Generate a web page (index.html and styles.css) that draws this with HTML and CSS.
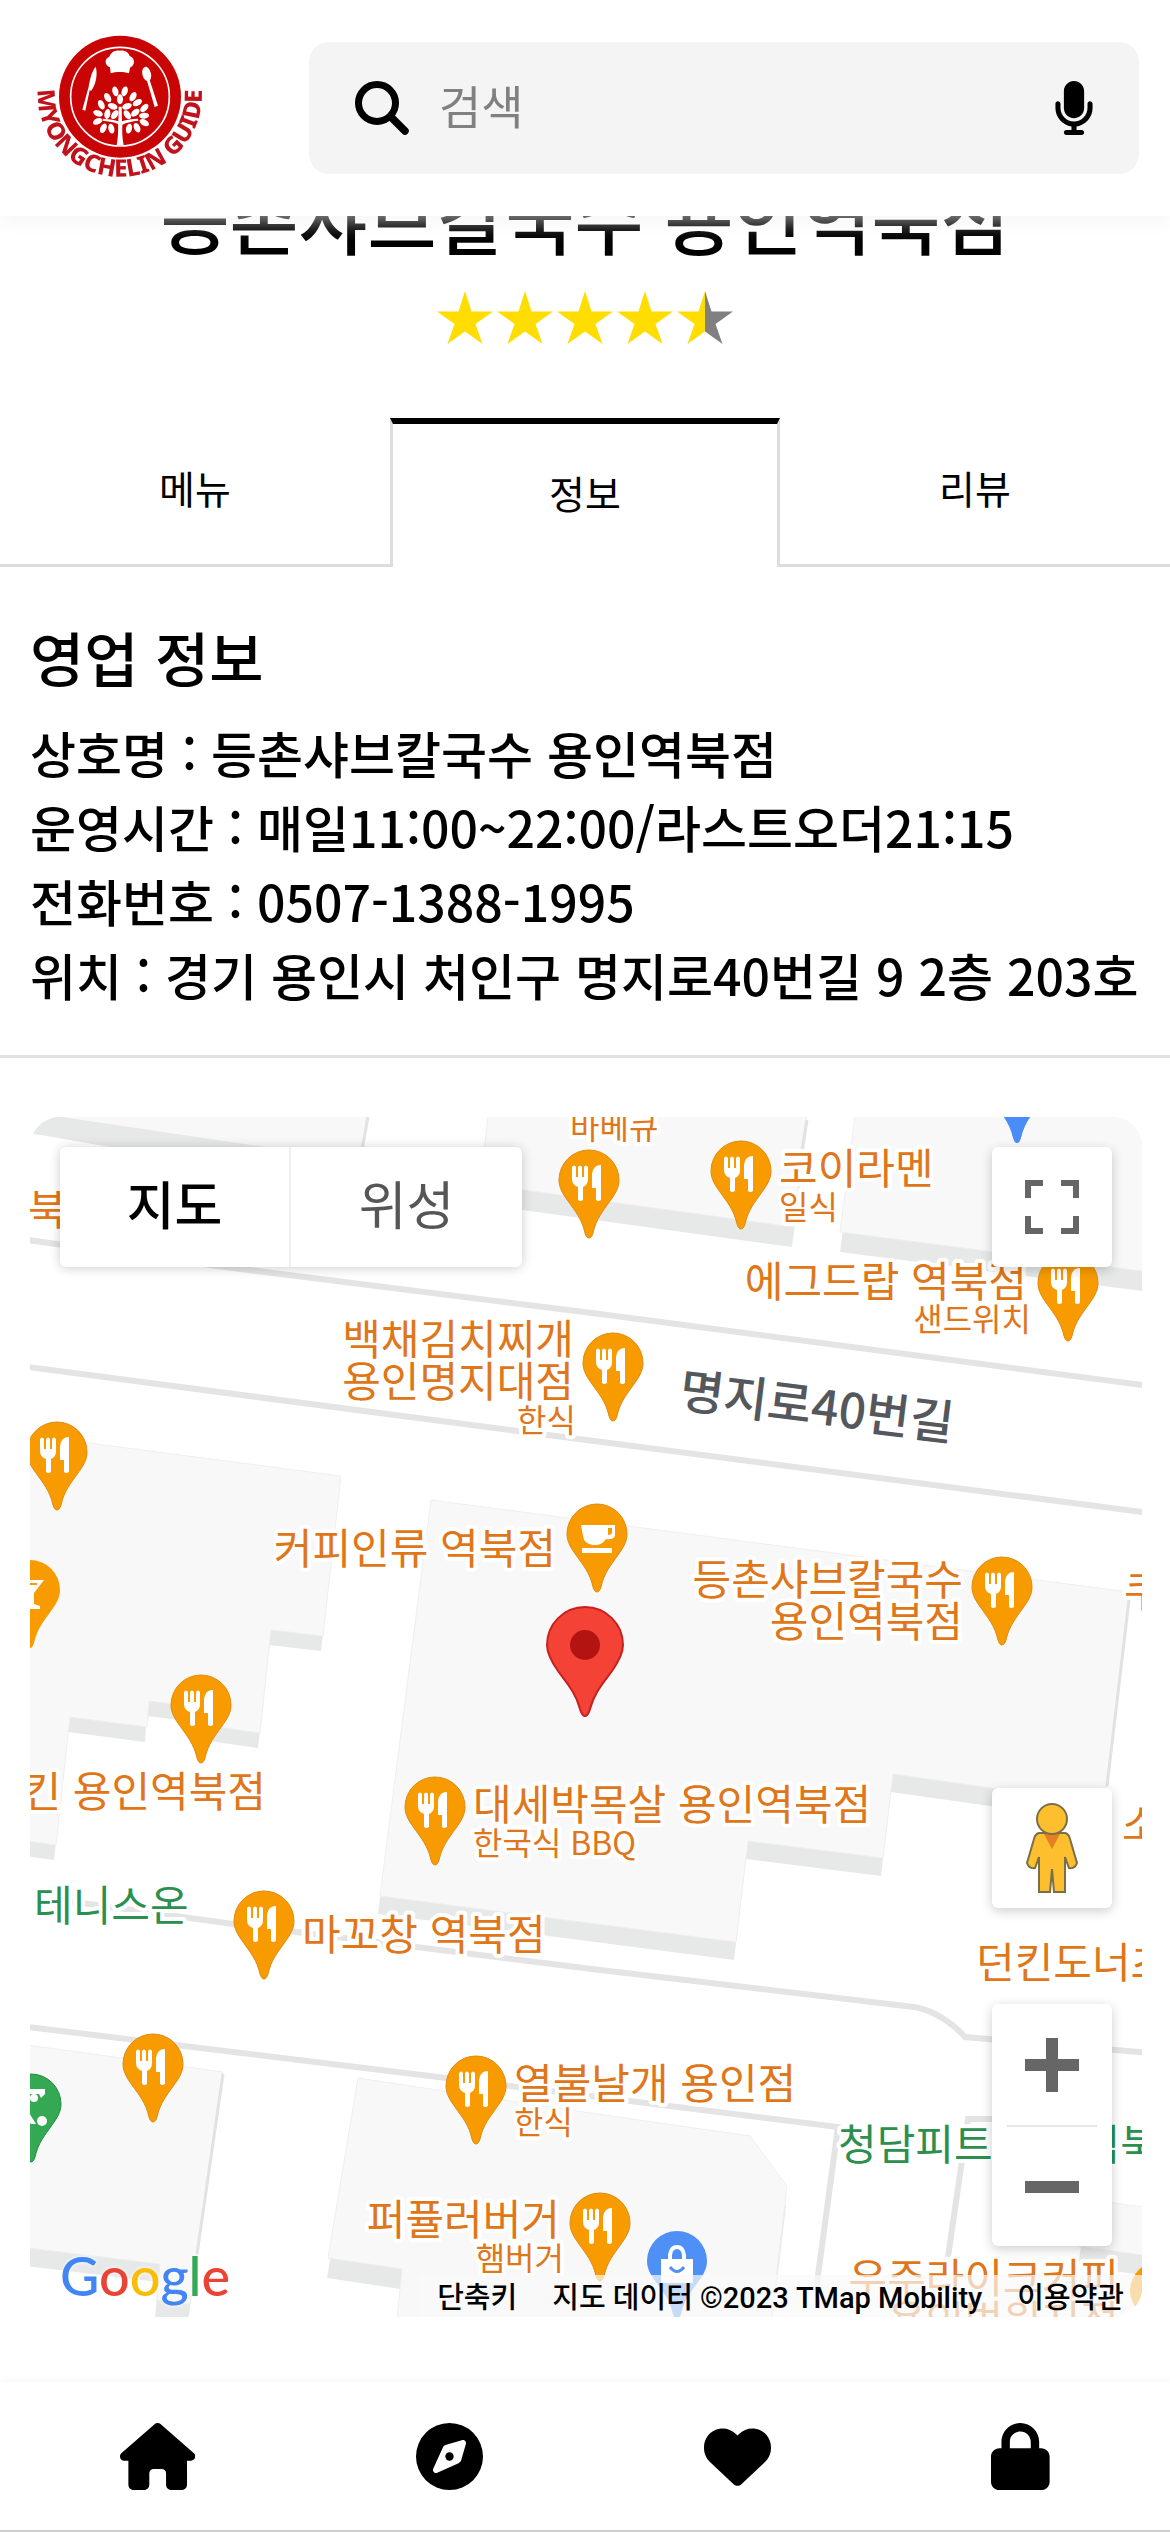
FILE: index.html
```html
<!DOCTYPE html>
<html lang="ko">
<head>
<meta charset="utf-8">
<meta name="viewport" content="width=device-width, initial-scale=1">
<title>등촌샤브칼국수 용인역북점</title>
<link rel="stylesheet" href="styles.css">
</head>
<body>
<header class="topbar">
  <a class="logo" href="#" aria-label="Myongchelin Guide">
    <svg viewBox="0 0 540 480">
      <defs>
        <path id="ring" d="M25 178 A246 246 0 1 0 515 178"/>
        <ellipse id="leaf" rx="9" ry="15"/>
      </defs>
      <circle cx="270" cy="206" r="183" fill="#c90404"/>
      <circle cx="270" cy="206" r="148" fill="none" stroke="#fff" stroke-width="5"/>
      <g fill="#fff">
        <path d="M242 136 L240 118 C224 112 222 92 238 86 C243 72 256 66 270 68 C286 66 296 74 299 84 C316 90 316 112 300 119 L297 136 C280 131 258 131 242 136Z"/>
        <path d="M197 116 C203 135 200 165 184 188 L179 187 L166 248 L157 245 L176 176 C180 155 184 132 197 116Z"/>
        <ellipse cx="350" cy="138" rx="13" ry="22" transform="rotate(-14 350 138)"/>
        <path d="M351 158 L359 156 L384 233 L374 237Z"/>
        <path d="M260 352 C265 325 265 300 264 288 C248 280 232 280 218 278 L219 272 C240 274 256 276 265 280 L266 236 H275 L276 280 C290 275 306 272 324 272 L325 278 C306 280 290 283 277 290 C276 312 277 332 281 352Z"/>
        <use href="#leaf" transform="translate(256 190) rotate(-14)"/>
        <use href="#leaf" transform="translate(284 190) rotate(18)"/>
        <use href="#leaf" transform="translate(233 209) rotate(-30)"/>
        <use href="#leaf" transform="translate(309 206) rotate(30)"/>
        <use href="#leaf" transform="translate(270 214)"/>
        <use href="#leaf" transform="translate(248 235) rotate(-70)"/>
        <use href="#leaf" transform="translate(291 235) rotate(70)"/>
        <use href="#leaf" transform="translate(214 230) rotate(-25)"/>
        <use href="#leaf" transform="translate(322 224) rotate(60)"/>
        <use href="#leaf" transform="translate(232 258) rotate(10)"/>
        <use href="#leaf" transform="translate(254 260) rotate(35)"/>
        <use href="#leaf" transform="translate(292 260) rotate(-35)"/>
        <use href="#leaf" transform="translate(316 254) rotate(50)"/>
        <use href="#leaf" transform="translate(343 240) rotate(45)"/>
        <use href="#leaf" transform="translate(204 256) rotate(-70)"/>
        <use href="#leaf" transform="translate(342 263) rotate(85)"/>
        <use href="#leaf" transform="translate(203 280) rotate(65)"/>
        <use href="#leaf" transform="translate(343 284) rotate(-60)"/>
        <use href="#leaf" transform="translate(220 301) rotate(25)"/>
        <use href="#leaf" transform="translate(244 302) rotate(-12)"/>
        <use href="#leaf" transform="translate(297 302) rotate(12)"/>
        <use href="#leaf" transform="translate(321 299) rotate(-25)"/>
      </g>
      <text class="logo-text"><textPath href="#ring" startOffset="50%">MYONGCHELIN GUIDE</textPath></text>
    </svg>
  </a>
  <form class="search" role="search">
    <button class="icon-btn" type="button" aria-label="검색하기">
      <svg class="search-icon" viewBox="0 0 54 54" fill="none" stroke="#000"><circle cx="22" cy="22" r="18.500" stroke-width="7"/><path d="M36 36 L50 50" stroke-width="7.500" stroke-linecap="round"/></svg>
    </button>
    <input class="search-input" type="text" placeholder="검색" aria-label="검색">
    <button class="icon-btn" type="button" aria-label="음성 검색">
      <svg class="mic-icon" viewBox="0 0 384 512"><path d="M192 0C139 0 96 43 96 96V256c0 53 43 96 96 96s96-43 96-96V96c0-53-43-96-96-96zM64 216c0-13.300-10.700-24-24-24s-24 10.700-24 24v40c0 89.100 66.200 162.700 152 174.400V464H120c-13.300 0-24 10.700-24 24s10.700 24 24 24H264c13.300 0 24-10.700 24-24s-10.700-24-24-24H216V430.400c85.800-11.700 152-85.300 152-174.400V216c0-13.300-10.700-24-24-24s-24 10.700-24 24v40c0 70.700-57.300 128-128 128s-128-57.300-128-128V216z"/></svg>
    </button>
  </form>
</header>

<main class="page">
  <h1 class="title">등촌샤브칼국수 용인역북점</h1>
  <svg class="stars" viewBox="0 0 296 53" role="img" aria-label="4.5">
    <defs>
      <path id="star" d="M28 0 L34.500 20.500 H56 L38.500 33 L45.500 53 L28 40.500 L10.500 53 L17.500 33 L0 20.500 H21.500Z"/>
      <linearGradient id="half"><stop offset="50%" stop-color="#ffdd00"/><stop offset="50%" stop-color="#808080"/></linearGradient>
    </defs>
    <g fill="#ffdd00">
      <use href="#star"/><use href="#star" x="60"/><use href="#star" x="120"/><use href="#star" x="180"/>
    </g>
    <use href="#star" x="240" fill="url(#half)"/>
  </svg>

  <nav class="tabs">
    <button class="tab" type="button">메뉴</button>
    <button class="tab tab-active" type="button">정보</button>
    <button class="tab" type="button">리뷰</button>
  </nav>

  <section class="info">
    <h2 class="info-title">영업 정보</h2>
    <p class="info-line">상호명 : 등촌샤브칼국수 용인역북점</p>
    <p class="info-line">운영시간 : 매일11:00~22:00/라스트오더21:15</p>
    <p class="info-line">전화번호 : 0507-1388-1995</p>
    <p class="info-line">위치 : 경기 용인시 처인구 명지로40번길 9 2층 203호</p>
  </section>

  <section class="map" aria-label="지도">
    <svg class="map-canvas" viewBox="30 1117 1112 1200" preserveAspectRatio="xMidYMid slice">
      <defs>
        <path id="drop" d="M0 88 C-2 88 -3 86 -4 83 C-7 69 -14 61 -21 51 C-26 44 -30 38 -30 30 A30 30 0 0 1 30 30 C30 38 26 44 21 51 C14 61 7 69 4 83 C3 86 2 88 0 88Z"/>
        <g id="food">
          <use href="#drop" fill="#f89b00" stroke="#e08a10" stroke-width="1"/>
          <path fill="#fff" d="M-17 17 q2 -3 4 0 V27 h2 V17 q2 -3 4 0 V27 h2 V17 q2 -3 4 0 V29 q0 6 -5 8 V50 q-3 2 -5 0 V37 q-6 -2 -6 -8Z M12 15 V50 q-3 2 -5 0 V38 H3 V24 Q4 15 12 15Z"/>
        </g>
        <g id="b1"><path d="M30 1080 H372 L362 1147 L340 1178 L62 1137 L30 1133Z"/></g>
        <g id="b2"><path d="M490 1100 H809 L793 1227 L480 1184Z"/></g>
        <g id="b3"><path d="M857 1100 H1150 V1272 L840 1232Z"/></g>
        <g id="b4"><path d="M20 1434 L341 1476 L323 1636 L271 1630 L260 1733 L205 1725 L207 1708 L149 1701 L147 1727 L70 1717 L56 1845 L20 1840Z"/></g>
        <g id="b5"><path d="M431 1500 L1129 1592 L1105 1804 L893 1774 L883 1858 L748 1841 L736 1942 L380 1896Z"/></g>
        <g id="b6"><path d="M20 2044 L223 2072 L190 2304 L157 2300 L160 2264 L20 2247Z"/></g>
        <g id="b7"><path d="M358 2078 L570 2110 L750 2136 L787 2186 L770 2330 H396 L402 2269 L328 2258Z"/></g>
        <g id="b8"><path d="M1085 2199 L1150 2208 V2256 L1078 2246Z"/></g>
      </defs>
      <g fill="#e7e8e8">
        <use href="#b2" x="-1" y="20"/><use href="#b3" y="20"/>
        <use href="#b4" x="-2" y="15"/><use href="#b5" x="-2" y="18"/><use href="#b6" x="-2" y="18"/><use href="#b7" x="-1" y="20"/><use href="#b8" y="20"/>
      </g>
      <g fill="#f8f8f8" stroke="#efefef" stroke-width="1">
        <use href="#b1"/><use href="#b2"/><use href="#b3"/><use href="#b4"/><use href="#b5"/><use href="#b6"/><use href="#b7"/><use href="#b8"/>
      </g>
      <path fill="#e6e9e8" d="M30 1117 H62 L265 1147 H110 L30 1133Z"/>
      <path d="M368 1117 L362 1150 M807 1120 L801 1155 M223 2074 L197 2254 M1129 1600 L1107 1786" stroke="#e2e2e2" stroke-width="3"/>
      <g fill="none" stroke="#e4e4e4" stroke-width="6">
        <path d="M20 1239 L225 1267 L600 1314 L1150 1386"/>
        <path d="M20 1366 L517 1431 L1150 1513"/>
        <path d="M60 1900 L233 1924 L600 1970 L914 2007 Q942 2012 965 2037 L1150 2053"/>
        <path d="M20 2026 L446 2078 L838 2127 L816 2290"/>
        <path d="M1000 2119 H968 L948 2257"/>
      </g>

      <use href="#drop" x="1017" y="1055" fill="#4a8df8"/>
      <use href="#food" x="589" y="1150"/>
      <use href="#food" x="741" y="1141"/>
      <use href="#food" x="1068" y="1253"/>
      <use href="#food" x="613" y="1333"/>
      <use href="#food" x="57" y="1422"/>
      <use href="#food" x="1002" y="1557"/>
      <use href="#food" x="201" y="1675"/>
      <use href="#food" x="435" y="1777"/>
      <use href="#food" x="264" y="1891"/>
      <use href="#food" x="153" y="2034"/>
      <use href="#food" x="476" y="2056"/>
      <use href="#food" x="600" y="2193"/>
      <use href="#drop" x="1160" y="2261" fill="#f89b00"/>
      <g transform="translate(30 1560)">
        <use href="#drop" fill="#f89b00"/>
        <path fill="#fff" d="M-14 20 H14 L4 33 V44 L10 46 V49 H-10 V46 L-4 44 V33Z"/>
        <path d="M-8 24 H7" stroke="#f89b00" stroke-width="2"/>
      </g>
      <g transform="translate(597 1504)">
        <use href="#drop" fill="#f89b00" stroke="#e08a10"/>
        <path fill="#fff" fill-rule="evenodd" d="M-16 21 H18 V32 Q16 36 9 35 Q6 40 0 41 H-4 Q-13 40 -14 32Z M11 24 V31 Q15 31 15 28 V24Z M-15 44 H15 V49 H-15Z"/>
      </g>
      <g transform="translate(31 2074)">
        <use href="#drop" fill="#34a853" stroke="#1e8e3e"/>
        <g fill="#fff"><path d="M-14 15 H14 V20 L10 24 L8 20 H-14Z"/><circle cx="3" cy="24" r="4"/><circle cx="11" cy="47" r="5"/><path d="M-6 32 L0 42 L5 50 H0 L-6 44Z"/></g>
      </g>
      <g transform="translate(677 2231)">
        <use href="#drop" fill="#4f90f7"/>
        <path fill="#fff" d="M-16 28 H16 V52 H-16Z"/>
        <path fill="none" stroke="#fff" stroke-width="4" d="M-7 29 V24 Q-6 16 0 16 Q6 16 7 24 V29"/>
        <path fill="none" stroke="#4f90f7" stroke-width="3" d="M-7 36 Q0 45 7 36"/>
      </g>
      <g transform="translate(585 1606)">
        <path fill="#f44336" stroke="#c5221f" stroke-width="2" d="M0 110 C-3 110 -4 106 -5 103 C-9 87 -19 76 -27 65 C-34 55 -38 47 -38 39 A38 38 0 0 1 38 39 C38 47 34 55 27 65 C19 76 9 87 5 103 C4 106 3 110 0 110Z"/>
        <circle cy="39" r="15" fill="#b31412"/>
      </g>

      <g class="place">
        <text class="kind" x="570" y="1139">바베큐</text>
        <text x="779" y="1184">코이라멘</text><text class="kind" x="779" y="1219">일식</text>
        <text x="28" y="1225">북</text>
        <text class="end" x="1027" y="1297">에그드랍 역북점</text><text class="kind end" x="1031" y="1331">샌드위치</text>
        <text class="end" x="574" y="1355">백채김치찌개</text><text class="end" x="574" y="1397">용인명지대점</text><text class="kind end" x="576" y="1432">한식</text>
        <text class="end" x="556" y="1564">커피인류 역북점</text>
        <text class="end" x="963" y="1595">등촌샤브칼국수</text><text class="end" x="963" y="1637">용인역북점</text>
        <text x="1124" y="1607">쿠</text>
        <text class="end" x="266" y="1807">킨 용인역북점</text>
        <text x="473" y="1820">대세박목살 용인역북점</text><text class="kind" x="473" y="1855">한국식 BBQ</text>
        <text x="1122" y="1840">소</text>
        <text class="park" x="34" y="1921">테니스온</text>
        <text x="302" y="1950">마꼬창 역북점</text>
        <text x="976" y="1978">던킨도너츠</text>
        <text x="514" y="2099">열불날개 용인점</text><text class="kind" x="514" y="2134">한식</text>
        <text class="park" x="838" y="2160">청담피트니스 역북점</text>
        <text class="end" x="560" y="2235">퍼퓰러버거</text><text class="kind end" x="564" y="2270">햄버거</text>
        <text class="end" x="1119" y="2294">우주라이크커피</text><text class="end" x="1119" y="2336">용인법원지점</text>
      </g>
      <text class="road" transform="translate(678 1407) rotate(7)">명지로40번길</text>
    </svg>

    <div class="map-types">
      <button class="map-type map-type-on" type="button">지도</button>
      <button class="map-type" type="button">위성</button>
    </div>
    <button class="map-btn map-full" type="button" aria-label="전체 화면">
      <svg width="54" height="54" viewBox="0 0 54 54" fill="none" stroke="#666" stroke-width="6"><path d="M3 18 V3 H18 M36 3 H51 V18 M51 36 V51 H36 M18 51 H3 V36"/></svg>
    </button>
    <div class="map-side">
      <button class="map-btn" type="button" aria-label="스트리트 뷰">
        <svg width="52" height="90" viewBox="0 0 52 90" fill="#fdbf2d" stroke="#7a6f4a" stroke-width="2"><path d="M13 30 H39 Q43 31 44 36 L51 60 Q49 66 43 65 L39 54 V89 H28 L26 66 L24 89 H13 V54 L9 65 Q3 66 1 60 L8 36 Q9 31 13 30Z"/><path d="M18 31 H34 L26 46Z" fill="#e67e22" stroke="none"/><circle cx="26" cy="16" r="15"/></svg>
      </button>
      <div class="zoom">
        <button class="zoom-btn" type="button" aria-label="확대"><svg width="54" height="54" viewBox="0 0 54 54"><path fill="#666" d="M21 0 H33 V21 H54 V33 H33 V54 H21 V33 H0 V21 H21Z"/></svg></button>
        <button class="zoom-btn" type="button" aria-label="축소"><svg width="54" height="54" viewBox="0 0 54 54"><path fill="#666" d="M0 21 H54 V33 H0Z"/></svg></button>
      </div>
    </div>
    <a class="google" href="#"><span class="g-blue">G</span><span class="g-red">o</span><span class="g-yellow">o</span><span class="g-blue">g</span><span class="g-green">l</span><span class="g-red">e</span></a>
    <div class="map-legal">
      <a href="#">단축키</a><span>지도 데이터 ©2023 TMap Mobility</span><a href="#">이용약관</a>
    </div>
  </section>
</main>

<nav class="bottom-nav">
  <a href="#" aria-label="홈"><svg viewBox="0 0 576 512"><path d="M575.800 255.500c0 18-15 32.100-32 32.100h-32l.7 160.200c0 2.700-.2 5.400-.5 8.100V472c0 22.100-17.900 40-40 40H392c-22.100 0-40-17.900-40-40V384c0-17.700-14.300-32-32-32H256c-17.700 0-32 14.300-32 32v88c0 22.100-17.900 40-40 40H104c-22.100 0-40-17.900-40-40V287.600H32c-18 0-32-14-32-32.100c0-9 3-17 10-24L266.400 8c7-7 15-8 22-8s15 2 21 7L564.800 231.500c8 7 12 15 11 24z"/></svg></a>
  <a href="#" aria-label="탐색"><svg viewBox="0 0 512 512"><path fill-rule="evenodd" d="M256 0a256 256 0 1 0 0 512A256 256 0 1 0 256 0Z M325.100 306.700L162.400 380.600c-19.400 7.500-38.500-11.600-31-31l73.900-162.700c3.800-8.700 10.800-15.700 19.500-19.500l124.800-36c19.400-7.500 38.500 11.600 31 31l-36 124.800c-3.800 8.700-10.800 15.700-19.500 19.500z"/><circle cx="256" cy="256" r="32"/></svg></a>
  <a href="#" aria-label="찜"><svg viewBox="0 0 512 512"><path d="M47.600 300.400L228.300 469.100c7.500 7 17.400 10.900 27.700 10.900s20.200-3.900 27.700-10.900L464.400 300.400c30.400-28.300 47.600-68 47.600-109.500v-5.800c0-69.900-50.500-129.500-119.400-141C347 36.500 300.600 51.400 268 84L256 96 244 84c-32.600-32.600-79-47.500-124.600-39.900C50.500 55.600 0 115.200 0 185.100v5.800c0 41.500 17.200 81.200 47.600 109.500z"/></svg></a>
  <a href="#" aria-label="로그인"><svg viewBox="0 0 448 512"><path fill-rule="evenodd" d="M144 144v48H304V144c0-44.200-35.800-80-80-80s-80 35.800-80 80zM80 192V144C80 64.500 144.500 0 224 0s144 64.500 144 144v48h16c35.300 0 64 28.700 64 64V448c0 35.300-28.700 64-64 64H64c-35.300 0-64-28.700-64-64V256c0-35.300 28.700-64 64-64H80z"/></svg></a>
</nav>
</body>
</html>
```
FILE: styles.css
```css
* { box-sizing: border-box; }

body {
  margin: 0;
  background: #fff;
  color: #000;
  font-family: "Noto Sans CJK KR", sans-serif;
  font-weight: 500;
}

button {
  border: 0;
  padding: 0;
  background: none;
  font: inherit;
  color: inherit;
}

a { color: inherit; text-decoration: none; }
svg { display: block; }

/* header */
.topbar {
  position: fixed;
  z-index: 2;
  top: 0;
  left: 0;
  right: 0;
  height: 216px;
  display: flex;
  align-items: center;
  gap: 99px;
  padding: 0 31px 0 30px;
  background: #fff;
  box-shadow: 0 6px 18px rgba(240, 240, 240, 0.6);
}

.logo svg { width: 180px; height: 160px; overflow: visible; }

.logo-text {
  font-family: "Noto Sans", sans-serif;
  font-size: 72px;
  font-weight: 800;
  fill: #c1121c;
  text-anchor: middle;
}

.search {
  flex: 1;
  height: 132px;
  display: flex;
  align-items: center;
  gap: 30px;
  padding: 0 44px 0 46px;
  border-radius: 20px;
  background: #f4f4f4;
}

.search-icon { width: 54px; height: 54px; }
.mic-icon { width: 42px; height: 54px; }

.search-input {
  flex: 1;
  min-width: 0;
  border: 0;
  padding: 0 0 8px;
  background: none;
  font: inherit;
  font-size: 46px;
  font-weight: 400;
}

.search-input::placeholder { color: #808080; opacity: 1; }

/* shop heading */
.page { padding: 163px 0 215px; }

.title {
  margin: 0 0 20px;
  font-size: 75px;
  line-height: 108px;
  font-weight: 500;
  text-align: center;
}

.stars { width: 296px; height: 53px; margin: 0 auto; }

/* tabs */
.tabs {
  display: grid;
  grid-template-columns: repeat(3, 1fr);
  height: 149px;
  margin-top: 74px;
}

.tab {
  padding-bottom: 8px;
  border-bottom: 3px solid #ddd;
  font-size: 39px;
  font-weight: 400;
}

.tab-active {
  border: 3px solid #ddd;
  border-top: 6px solid #000;
  border-bottom: 0;
}

/* business information */
.info {
  padding: 46px 30px 44px;
  border-bottom: 3px solid #e2e2e2;
}

.info-title {
  margin: 0 0 14px;
  font-size: 59px;
  line-height: 88px;
  font-weight: 500;
}

.info-line {
  margin: 0;
  font-size: 50px;
  line-height: 74px;
}

/* map */
.map {
  position: relative;
  height: 1200px;
  margin: 59px 28px 0 30px;
  border-radius: 30px;
  overflow: hidden;
  background: #fff;
}

.map-canvas { width: 100%; height: 100%; }

.place text,
.road {
  font-size: 42px;
  font-weight: 400;
  fill: #e0761a;
  stroke: #fff;
  stroke-width: 8px;
  stroke-linejoin: round;
  paint-order: stroke;
}

.place .kind { font-size: 32px; }
.place .end { text-anchor: end; }
.place .park { fill: #2b8f4d; }
.road { font-size: 48px; font-weight: 500; fill: #54585c; }

.map-types {
  position: absolute;
  top: 30px;
  left: 30px;
  display: flex;
  border-radius: 6px;
  background: #fff;
  box-shadow: 0 1px 12px rgba(0, 0, 0, 0.2);
}

.map-type {
  width: 231px;
  height: 120px;
  padding-bottom: 10px;
  font-size: 52px;
  font-weight: 400;
  color: #565656;
}

.map-type-on {
  border-right: 2px solid #eee;
  font-weight: 500;
  color: #000;
}

.map-btn,
.zoom {
  border-radius: 6px;
  background: #fff;
  box-shadow: 0 3px 12px rgba(0, 0, 0, 0.2);
}

.map-btn {
  display: grid;
  place-items: center;
  width: 120px;
  height: 120px;
}

.map-full { position: absolute; top: 30px; right: 30px; }

.map-side {
  position: absolute;
  right: 30px;
  bottom: 71px;
  display: grid;
  gap: 96px;
}

.zoom { padding: 0 15px; }

.zoom-btn {
  display: grid;
  place-items: center;
  width: 90px;
  height: 121px;
}

.zoom-btn + .zoom-btn { border-top: 2px solid #e6e6e6; }

.google {
  position: absolute;
  left: 30px;
  bottom: 6px;
  font-family: Lato, sans-serif;
  font-size: 54px;
  line-height: 70px;
  font-weight: 500;
  text-shadow: 0 0 4px #fff;
}

.g-blue { color: #4285f4; }
.g-red { color: #ea4335; }
.g-yellow { color: #fbbc05; }
.g-green { color: #34a853; }

.map-legal {
  position: absolute;
  right: 0;
  bottom: 0;
  display: flex;
  gap: 35px;
  height: 42px;
  padding: 0 18px;
  background: rgba(250, 250, 250, 0.7);
  font-family: Roboto, "Noto Sans CJK KR", sans-serif;
  font-size: 29px;
  line-height: 46px;
}

/* bottom navigation */
.bottom-nav {
  position: fixed;
  left: 0;
  right: 0;
  bottom: 0;
  height: 150px;
  display: flex;
  align-items: center;
  justify-content: space-between;
  padding: 0 120px;
  border-bottom: 2px solid #ccc;
  background: #fff;
  box-shadow: 0 -2px 6px rgba(240, 240, 240, 0.6);
}

.bottom-nav svg { height: 67px; }
```
